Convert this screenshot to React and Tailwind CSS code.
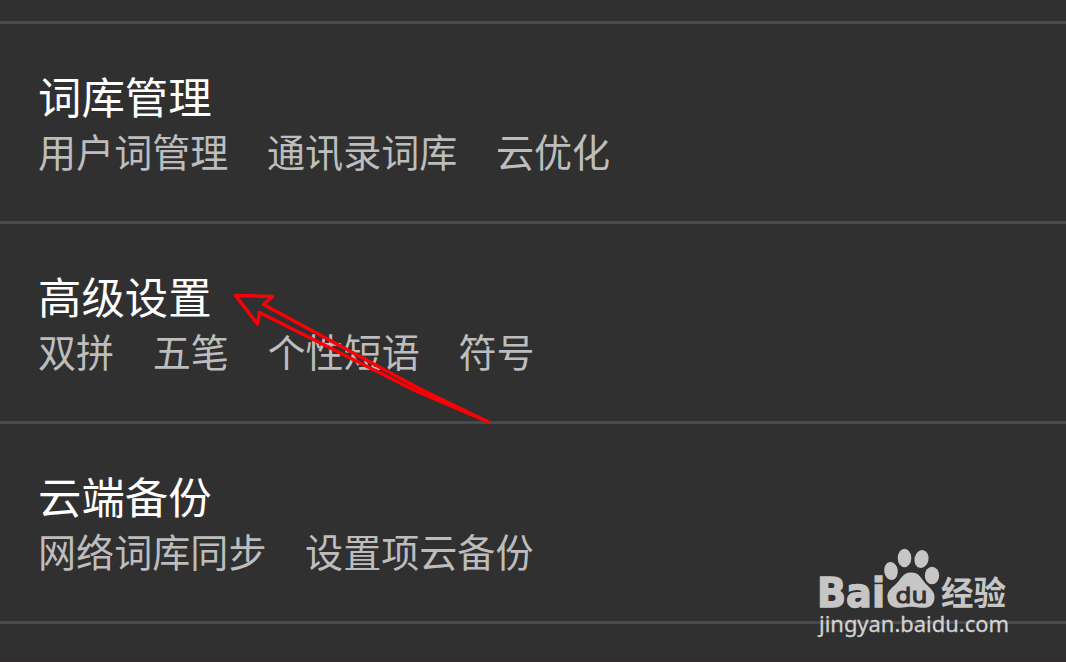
import React from "react";

const sections = [
  { title: "词库管理", items: ["用户词管理", "通讯录词库", "云优化"] },
  { title: "高级设置", items: ["双拼", "五笔", "个性短语", "符号"] },
  { title: "云端备份", items: ["网络词库同步", "设置项云备份"] },
];

const SettingsRow = ({ title, items }) => (
  <li className="h-[200px] border-b-3 border-[#4a4a4a] pt-[45px] pl-[38px]">
    <h2 className="h-[54px] text-[43.4px] leading-[52px] text-white">{title}</h2>
    <p className="flex h-[56px] gap-[38.6px] text-[38.1px] leading-[56px] text-[#bdbdbd]">
      {items.map((item) => (
        <span key={item}>{item}</span>
      ))}
    </p>
  </li>
);

const Arrow = () => (
  <svg
    className="absolute top-[280px] left-[220px]"
    width="280"
    height="150"
    viewBox="0 0 280 150"
    fill="none"
    stroke="#fb0007"
    strokeWidth="3.5"
    strokeLinejoin="round"
  >
    <path d="M268.5 142 L200 109 L43.5 24.5 L52.5 16.5 L15.5 15.5 L37.5 44 L39.5 32.5 L196 111 Z" />
  </svg>
);

const Watermark = () => (
  <svg
    className="absolute top-[540px] left-[806px]"
    width="220"
    height="110"
    viewBox="0 0 220 110"
    fill="#c6c6c6"
  >
    <text x="11" y="66.5" textLength="68" lengthAdjust="spacingAndGlyphs" stroke="#c6c6c6" strokeWidth="1.4" className="font-['DejaVu_Sans'] text-[41px] font-bold">
      Bai
    </text>
    {/* paw */}
    <ellipse cx="85" cy="31" rx="6.8" ry="9" transform="rotate(-8 85 31)" />
    <ellipse cx="98.5" cy="18" rx="6.8" ry="9.3" />
    <ellipse cx="115.5" cy="19" rx="7" ry="9" transform="rotate(12 115.5 19)" />
    <ellipse cx="126" cy="35.5" rx="7.2" ry="8.8" />
    <path d="M105 32.5 C96 32.5 95 40 89 45 C83 50 81 53 81.5 58 C82 66 89 69 97 67.5 C103 66.5 107 66.5 113 67.5 C122 69 128 66 128.5 58 C129 52 125 49 120 44 C115 39 114 32.5 105 32.5 Z" />
    <text x="89.5" y="62.5" textLength="32" lengthAdjust="spacingAndGlyphs" fill="#303030" className="font-['DejaVu_Sans'] text-[22px]" stroke="#303030" strokeWidth="0.9">
      du
    </text>
    <text x="135" y="64.5" textLength="65" lengthAdjust="spacingAndGlyphs" className="font-['Noto_Sans_CJK_SC'] text-[33px] font-bold">
      经验
    </text>
    <text x="13" y="92.3" textLength="190" lengthAdjust="spacingAndGlyphs" fill="#d2d2d2" stroke="#d2d2d2" strokeWidth="0.3" className="font-['Noto_Sans'] text-[22px]">
      jingyan.baidu.com
    </text>
  </svg>
);

export default function App() {
  return (
    <div className="relative flex h-[662px] w-[1066px] flex-col overflow-hidden border-b border-[#38292e] bg-[#303030] font-['Noto_Sans_CJK_SC',sans-serif]">
      <div className="h-6 shrink-0 border-b-3 border-[#4a4a4a]" />
      <ul>
        {sections.map((section) => (
          <SettingsRow key={section.title} {...section} />
        ))}
      </ul>
      <Arrow />
      <Watermark />
    </div>
  );
}
